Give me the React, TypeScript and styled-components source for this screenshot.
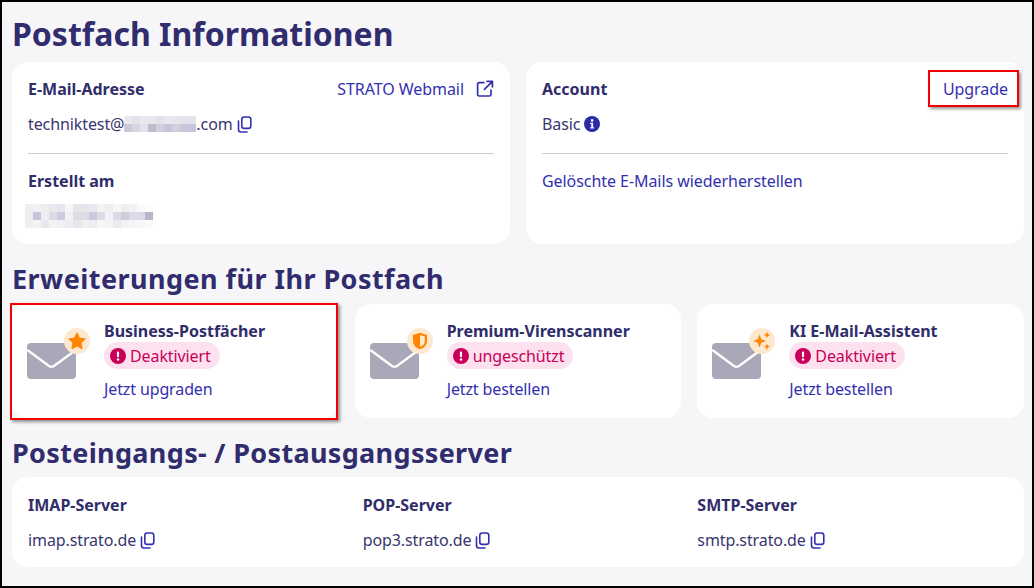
import React from "react";
import styled, { createGlobalStyle } from "styled-components";

const Global = createGlobalStyle`
  html, body { margin: 0; padding: 0; background: #000; }
  * { box-sizing: border-box; }
`;

const Frame = styled.div`
  position: relative;
  width: 1034px;
  height: 588px;
  border: 2px solid #000;
  background: #f6f6f9;
  padding: 0 8px 0 10px;
  font-family: "Noto Sans", sans-serif;
  color: #2f2d6e;
  overflow: hidden;
`;

const Heading = styled.h2<{ $top: number; $size: number; $track?: number }>`
  margin: ${(p) => p.$top}px 0 0;
  font-size: ${(p) => p.$size}px;
  letter-spacing: ${(p) => p.$track ?? 0}px;
  line-height: 40px;
  font-weight: 700;
  color: #302c6d;
`;

const TwoCols = styled.div`
  display: grid;
  grid-template-columns: 498px 498px;
  gap: 16px;
  margin-top: 8px;
`;

const Card = styled.div`
  background: #fff;
  border-radius: 16px;
  padding: 16px;
  height: 182px;
`;

const Row = styled.div`
  display: flex;
  justify-content: space-between;
  align-items: center;
  height: 22px;
`;

const Label = styled.div`
  font-size: 16px;
  line-height: 22px;
  font-weight: 700;
  color: #2f2d6a;
`;

const TextLink = styled.a`
  display: inline-flex;
  align-items: center;
  font-size: 16px;
  line-height: 22px;
  letter-spacing: -0.06px;
  color: #3330b0;
`;

const Value = styled.div`
  display: flex;
  align-items: center;
  gap: 4px;
  margin-top: 13px;
  height: 22px;
  font-size: 16px;
  letter-spacing: -0.1px;
  color: #38366f;
`;

const Email = styled.span`
  display: inline-flex;
  align-items: center;
`;

const LinkGap = styled.span`
  width: 12px;
`;

const Divider = styled.hr`
  border: 0;
  height: 1px;
  background: #cbcad5;
  margin: 18px 0 16px;
`;

const Mosaic = styled.div<{ $cols: number; $size: number }>`
  display: grid;
  grid-template-columns: repeat(${(p) => p.$cols}, ${(p) => p.$size}px);
  grid-auto-rows: ${(p) => p.$size}px;
`;

const Pixel = styled.i<{ $c: string }>`
  background: ${(p) => p.$c};
`;

const DateMosaic = styled(Mosaic)`
  margin: 12px 0 0 -3px;
`;

const Extras = styled.div`
  display: grid;
  grid-template-columns: repeat(3, 1fr);
  gap: 16px;
  margin-top: 5px;
`;

const ExtraCard = styled.div`
  display: flex;
  background: #fff;
  border-radius: 16px;
  height: 114px;
  padding: 16px 0 0 15px;
`;

const MailIcon = styled.div`
  position: relative;
  width: 61px;
  height: 60px;
  margin-top: 6px;
  flex: none;
`;

const EnvelopeSvg = styled.svg`
  position: absolute;
  left: 0;
  top: 17px;
`;

const Badge = styled.div`
  position: absolute;
  left: 37px;
  top: 2px;
  width: 26px;
  height: 26px;
  border-radius: 50%;
  background: #fde8cf;
  display: flex;
  align-items: center;
  justify-content: center;
`;

const ExtraBody = styled.div`
  margin-left: 16px;
  display: flex;
  flex-direction: column;
  align-items: flex-start;
`;

const Pill = styled.div`
  display: inline-flex;
  align-items: center;
  gap: 4px;
  height: 27px;
  padding: 0 9px 0 6px;
  border-radius: 14px;
  background: #fde1ee;
  font-size: 16px;
  letter-spacing: -0.1px;
  color: #c8005a;
`;

const ExtraLink = styled(TextLink)`
  margin-top: 9px;
  letter-spacing: -0.12px;
`;

const ServerCard = styled.div`
  display: grid;
  grid-template-columns: repeat(3, 1fr);
  gap: 24px;
  background: #fff;
  border-radius: 16px;
  height: 90px;
  padding: 17px 16px 16px;
  margin-top: 4px;
`;

const Outline = styled.div<{ $x: number; $y: number; $w: number; $h: number }>`
  position: absolute;
  left: ${(p) => p.$x}px;
  top: ${(p) => p.$y}px;
  width: ${(p) => p.$w}px;
  height: ${(p) => p.$h}px;
  border: 2px solid #f40000;
  box-shadow: 2px 2px 3px rgba(60, 60, 60, 0.55);
  pointer-events: none;
`;

const Copy = () => (
  <svg width="15" height="17" viewBox="0 0 15 17" fill="none" stroke="#3330b0" strokeWidth="1.6">
    <rect x="4.800" y="1" width="9" height="11.400" rx="2.400" />
    <path d="M1.500 5v8.500a2.500 2.500 0 0 0 2.500 2.500h6" strokeLinecap="round" />
  </svg>
);

const External = () => (
  <svg width="18" height="18" viewBox="0 0 18 18" fill="none" stroke="#3330b0" strokeWidth="1.7" strokeLinecap="round" strokeLinejoin="round">
    <path d="M8 2.600H3.200a1.600 1.600 0 0 0-1.600 1.600v10.200a1.600 1.600 0 0 0 1.600 1.600h10.200a1.600 1.600 0 0 0 1.600-1.600V10" />
    <path d="M11 1.400h5.400v5.400M16.200 1.600 8.400 9.400" />
  </svg>
);

const Info = () => (
  <svg width="16" height="16" viewBox="0 0 16 16">
    <circle cx="8" cy="8" r="8" fill="#2d2aa8" />
    <circle cx="8.100" cy="4.400" r="1.300" fill="#fff" />
    <path d="M6.200 6.800h2.900v4.400h1v1.200H6.200v-1.200h1.100V8H6.200z" fill="#fff" />
  </svg>
);

const Alert = () => (
  <svg width="16" height="16" viewBox="0 0 16 16">
    <circle cx="8" cy="8" r="8" fill="#c8005a" />
    <rect x="6.900" y="3.400" width="2.200" height="5.800" rx="1" fill="#fff" />
    <circle cx="8" cy="11.400" r="1.250" fill="#fff" />
  </svg>
);

const Envelope = () => (
  <EnvelopeSvg width="49" height="36" viewBox="0 0 49 36">
    <rect width="49" height="36" rx="4" fill="#a9a8b8" />
    <path d="M1 7.500 22 23q2.500 1.500 5 0L48 7.500" fill="none" stroke="#fff" strokeWidth="2.200" strokeLinecap="round" />
  </EnvelopeSvg>
);

const Star = () => (
  <svg width="18" height="18" viewBox="0 0 18 18">
    <path d="M9 .8l2.500 5.300 5.800.8-4.200 4 1 5.800L9 14.100l-5.100 2.600 1-5.800-4.200-4 5.800-.8z" fill="#ff8500" stroke="#ff8500" strokeLinejoin="round" />
  </svg>
);

const Shield = () => (
  <svg width="16" height="18" viewBox="0 0 16 18">
    <path d="M8 .8 15 3v6c0 4-3 7-7 8.300C4 16 1 13 1 9V3z" fill="#ff8500" />
    <path d="M8 3 12.800 4.500V9c0 2.800-2 5-4.800 6z" fill="#fde8cf" />
  </svg>
);

const Sparkles = () => (
  <svg width="20" height="20" viewBox="0 0 20 20" fill="#ff8500">
    <path d="M7.500 3.500 9.300 8.200 14 10l-4.700 1.800-1.800 4.700-1.800-4.700L1 10l4.700-1.800z" />
    <path d="M15 .8l.9 2.300 2.300.9-2.300.9-.9 2.300-.9-2.300-2.300-.9 2.300-.9z" />
    <path d="M15 12.500l.9 2.300 2.300.9-2.300.9-.9 2.300-.9-2.300-2.300-.9 2.300-.9z" />
  </svg>
);

const emailPixels = [
  "#e9e8ee", "#e4e3ea", "#e9e8ee", "#e6e6ec", "#e2e2ea", "#e9e8ee", "#e6e6ec", "#e4e3ea", "#e4e3ea",
  "#c9c9da", "#d6d5e1", "#e2e1e8", "#bdbcce", "#cfcfdf", "#c3c5da", "#d6cfd8", "#c6c7da", "#c6c7da",
];

const dateRows = [
  ["#eeedf2", "#f2f1f5", "#eeedf2", "#e9e8ee", "#e6e5ec", "#f6f6f9", "#e6e5ec", "#e6e5ec", "#e9e8ee", "#f4f4f7", "#eeedf2", "#f6f7f9", "#eeedf2", "#f2f2f5", "#fbfbfc", "#fdfdfe"],
  ["#eeedf2", "#c6c5d8", "#eeedf2", "#dedae2", "#ccccdf", "#f2f2f5", "#dddde7", "#dfdbe2", "#c9cade", "#dcdce8", "#f2f1f5", "#ded9e2", "#cfcbd8", "#dcdce8", "#dadae6", "#b7b5c9"],
  ["#efeef3", "#f3f3f6", "#e8e7ee", "#f2f1f5", "#f0f0f4", "#eeedf2", "#e6e5ec", "#f0f0f4", "#eeedf2", "#f7f7f9", "#f3f3f6", "#ebeaf0", "#f3f3f6", "#f5f5f8", "#f7f7f9", "#fafafb"],
];

const servers = [
  ["IMAP-Server", "imap.strato.de"],
  ["POP-Server", "pop3.strato.de"],
  ["SMTP-Server", "smtp.strato.de"],
];

const extras = [
  { title: "Business-Postfächer", status: "Deaktiviert", link: "Jetzt upgraden", icon: <Star /> },
  { title: "Premium-Virenscanner", status: "ungeschützt", link: "Jetzt bestellen", icon: <Shield /> },
  { title: "KI E-Mail-Assistent", status: "Deaktiviert", link: "Jetzt bestellen", icon: <Sparkles /> },
];

export default function App() {
  return (
    <Frame>
      <Global />
      <Heading $top={12} $size={32}>Postfach Informationen</Heading>
      <TwoCols>
        <Card>
          <Row>
            <Label>E-Mail-Adresse</Label>
            <TextLink>
              STRATO Webmail
              <LinkGap />
              <External />
            </TextLink>
          </Row>
          <Value>
            <Email>
              techniktest@
              <Mosaic $cols={9} $size={8}>
                {emailPixels.map((c, i) => (
                  <Pixel key={i} $c={c} />
                ))}
              </Mosaic>
              .com
            </Email>
            <Copy />
          </Value>
          <Divider />
          <Label>Erstellt am</Label>
          <DateMosaic $cols={16} $size={8}>
            {dateRows.flat().map((c, i) => (
              <Pixel key={i} $c={c} />
            ))}
          </DateMosaic>
        </Card>
        <Card>
          <Row>
            <Label>Account</Label>
            <TextLink>Upgrade</TextLink>
          </Row>
          <Value>
            Basic
            <Info />
          </Value>
          <Divider />
          <TextLink>Gelöschte E-Mails wiederherstellen</TextLink>
        </Card>
      </TwoCols>
      <Heading $top={15} $size={27} $track={0.45}>Erweiterungen für Ihr Postfach</Heading>
      <Extras>
        {extras.map((e) => (
          <ExtraCard key={e.title}>
            <MailIcon>
              <Envelope />
              <Badge>{e.icon}</Badge>
            </MailIcon>
            <ExtraBody>
              <Label>{e.title}</Label>
              <Pill>
                <Alert />
                {e.status}
              </Pill>
              <ExtraLink>{e.link}</ExtraLink>
            </ExtraBody>
          </ExtraCard>
        ))}
      </Extras>
      <Heading $top={15} $size={27} $track={0.33}>Posteingangs- / Postausgangsserver</Heading>
      <ServerCard>
        {servers.map(([label, host]) => (
          <div key={label}>
            <Label>{label}</Label>
            <Value>
              {host}
              <Copy />
            </Value>
          </div>
        ))}
      </ServerCard>
      <Outline $x={926} $y={68} $w={91} $h={37} />
      <Outline $x={8} $y={301} $w={328} $h={117} />
    </Frame>
  );
}
